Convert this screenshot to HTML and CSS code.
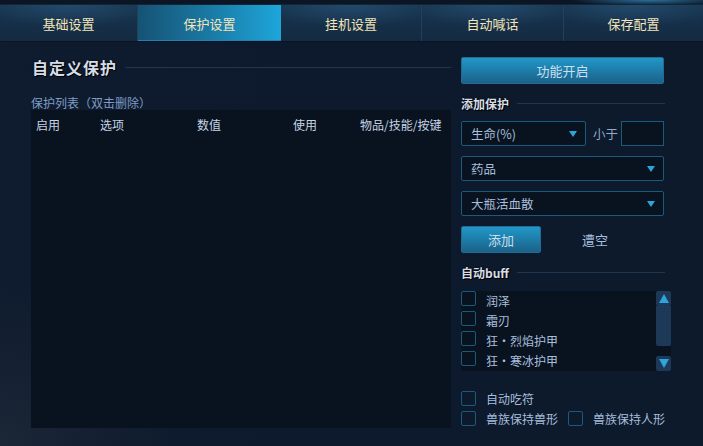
FILE: index.html
```html
<!DOCTYPE html>
<html lang="zh-CN">
<head>
  <meta charset="UTF-8">
  <title>保护设置</title>
  <link rel="stylesheet" href="styles.css">
</head>
<body>

  <div class="topstrip"></div>

  <nav class="tabs">
    <div class="tab" style="width:138px">基础设置</div>
    <div class="tab active" style="width:143px">保护设置</div>
    <div class="tab" style="width:141px">挂机设置</div>
    <div class="tab" style="width:142px">自动喊话</div>
    <div class="tab last" style="width:139px">保存配置</div>
  </nav>

  <div class="main">
    <section class="left">
      <div class="heading big"><span>自定义保护</span><i></i></div>
      <div class="caption">保护列表（双击删除）</div>
      <div class="table">
        <div class="thead">
          <span class="c1">启用</span>
          <span class="c2">选项</span>
          <span class="c3">数值</span>
          <span class="c4">使用</span>
          <span class="c5">物品/技能/按键</span>
        </div>
      </div>
    </section>

    <section class="right">
      <button class="btn wide">功能开启</button>

      <div class="heading small"><span>添加保护</span><i></i></div>

      <div class="row cond">
        <div class="select short">生命(%)<b class="arrow"></b></div>
        <span class="lbl">小于</span>
        <div class="input"></div>
      </div>
      <div class="select">药品<b class="arrow"></b></div>
      <div class="select">大瓶活血散<b class="arrow"></b></div>

      <div class="row actions">
        <button class="btn add">添加</button>
        <span class="link">遭空</span>
      </div>

      <div class="heading small buffhead"><span>自动buff</span><i></i></div>

      <div class="bufflist">
        <div class="items">
          <label class="check top"><em></em>润泽</label>
          <label class="check top"><em></em>霜刃</label>
          <label class="check top"><em></em>狂・烈焰护甲</label>
          <label class="check top"><em></em>狂・寒冰护甲</label>
        </div>
        <div class="scroll">
          <div class="sbtn"><b class="up"></b></div>
          <div class="track"><div class="thumb"></div></div>
          <div class="sbtn"><b class="down"></b></div>
        </div>
      </div>

      <div class="extras">
        <label class="check"><em></em>自动吃符</label>
        <div class="pair">
          <label class="check"><em></em>兽族保持兽形</label>
          <label class="check"><em></em>兽族保持人形</label>
        </div>
      </div>
    </section>
  </div>

</body>
</html>
```

FILE: styles.css
```css
:root {
  --bg: #0d1a2d;
  --panel: #09131f;
  --cream: #f4e4b8;
  --text: #a8bedc;
  --line: #1f3550;
  --edge: #1b5a7c;
  --cyan: #2aa6dc;
}

* { box-sizing: border-box; }

body {
  margin: 0;
  width: 703px;
  height: 446px;
  overflow: hidden;
  font-family: "Noto Sans CJK SC", "Noto Sans", sans-serif;
  font-size: 12px;
  color: var(--text);
  background:
    radial-gradient(ellipse 180px 160px at 0 446px, #1b2636 0%, rgba(27,38,54,0) 100%),
    linear-gradient(90deg, #0f1c2f 0%, #0d1a2d 40%, #0c1a2c 100%);
}

.topstrip {
  height: 5px;
  background:
    radial-gradient(ellipse 80px 6px at 650px 0, #2a6f9c 0%, rgba(42,111,156,0) 100%),
    #0b1523;
  border-bottom: 1px solid #142538;
}

.tabs {
  display: flex;
  height: 37px;
  border-bottom: 1px solid #0a1422;
}

.tab {
  display: flex;
  align-items: center;
  justify-content: center;
  color: var(--cream);
  font-size: 13px;
  border-right: 1px solid #24415c;
  background:
    radial-gradient(ellipse 90px 22px at 50% 0, rgba(44,92,130,0.55) 0%, rgba(44,92,130,0) 100%),
    linear-gradient(#173550, #142a41);
}

.tab.last { border-right: none; }

.tab.active {
  border-right: none;
  background: linear-gradient(90deg, #165274 0%, #1a7eaa 55%, #1ea6da 100%);
  box-shadow: inset 0 -1px 0 #2a7db0;
}

.main {
  display: flex;
  gap: 10px;
  padding: 15px 0 0 31px;
}

/* left column */
.left { width: 420px; }

.heading {
  display: flex;
  align-items: center;
  gap: 8px;
}

.heading span {
  font-weight: bold;
  color: #d7dde6;
  white-space: nowrap;
  text-shadow: 0 0 2px #000, 1px 1px 0 #000;
}

.heading i {
  flex: 1;
  height: 1px;
  background: var(--line);
}

.heading.big { height: 18px; margin-top: 1px; }
.heading.big span { font-size: 16px; letter-spacing: 1px; padding-left: 1px; }

.caption {
  margin-top: 19px;
  height: 15px;
  line-height: 15px;
  color: #7f9cc4;
  font-size: 12px;
}

.table {
  height: 318px;
  background: var(--panel);
}

.thead {
  position: relative;
  height: 28px;
  color: #c5d3e6;
  font-size: 12px;
}

.thead span { position: absolute; top: 6px; }
.thead .c1 { left: 5px; }
.thead .c2 { left: 69px; }
.thead .c3 { left: 166px; }
.thead .c4 { left: 262px; }
.thead .c5 { left: 329px; }

/* right column */
.right {
  width: 204px;
  display: flex;
  flex-direction: column;
}

.btn {
  font-family: inherit;
  font-size: 13px;
  color: #c9dff0;
  border: 1px solid #246a92;
  border-radius: 2px;
  background: linear-gradient(#2197c8, #1a6289);
  cursor: pointer;
  padding: 0;
}

.btn.wide {
  width: 203px;
  height: 27px;
}

.heading.small { margin-top: 11px; height: 16px; }
.heading.small span { font-size: 12px; }

.row {
  display: flex;
  align-items: center;
}

.select {
  position: relative;
  flex: none;
  height: 25px;
  width: 203px;
  border: 1px solid var(--edge);
  border-radius: 2px;
  background: var(--panel);
  padding-left: 9px;
  line-height: 23px;
  color: var(--text);
  font-size: 12.5px;
  margin-top: 10px;
}

.row .select { margin-top: 0; }
.select.short { width: 125px; }

.cond { margin-top: 10px; }

.arrow {
  position: absolute;
  right: 8px;
  top: 9px;
  width: 0;
  height: 0;
  border-left: 4px solid transparent;
  border-right: 4px solid transparent;
  border-top: 6px solid var(--cyan);
}

.lbl {
  margin-left: 7px;
  font-size: 12.5px;
  white-space: nowrap;
  color: #93a9c6;
}

.input {
  flex: none;
  margin-left: 3px;
  width: 43px;
  height: 25px;
  border: 1px solid var(--edge);
  background: var(--panel);
}

.actions { margin-top: 10px; }

.btn.add {
  width: 80px;
  height: 27px;
}

.link {
  margin-left: 41px;
  font-size: 13px;
  color: #a6bfdd;
}

.buffhead { margin-top: 10px; }

.bufflist {
  display: flex;
  margin-top: 11px;
  width: 210px;
  height: 80px;
}

.items {
  width: 195px;
  background: var(--panel);
  display: flex;
  flex-direction: column;
}

.check {
  display: flex;
  align-items: center;
  height: 20px;
  white-space: nowrap;
  color: var(--text);
  font-size: 12px;
}

.check.top {
  align-items: flex-start;
  line-height: 20px;
}

.check em {
  width: 15px;
  height: 15px;
  border: 1px solid var(--edge);
  border-radius: 2px;
  margin-right: 10px;
  flex: none;
}

.scroll {
  width: 15px;
  display: flex;
  flex-direction: column;
  background: var(--panel);
}

.sbtn {
  height: 15px;
  border-radius: 2px;
  background: #1e3857;
  display: flex;
  align-items: center;
  justify-content: center;
}

.sbtn .up,
.sbtn .down {
  width: 0;
  height: 0;
  border-left: 5px solid transparent;
  border-right: 5px solid transparent;
}

.sbtn .up { border-bottom: 9px solid var(--cyan); }
.sbtn .down { border-top: 9px solid var(--cyan); }

.track {
  flex: 1;
  padding-bottom: 10px;
}

.thumb {
  height: 100%;
  border-radius: 0 0 2px 2px;
  background: #1e3857;
}

.extras { margin-top: 17px; }

.pair {
  display: flex;
  gap: 10px;
}
```
